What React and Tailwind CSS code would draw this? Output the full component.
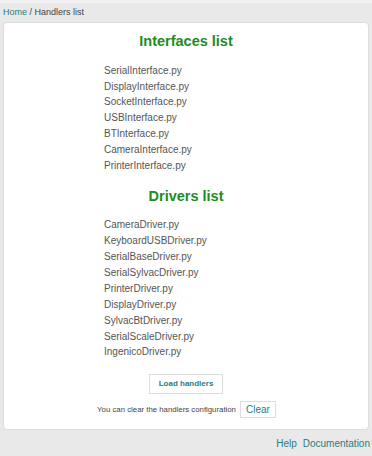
export default function App() {
  const interfaces = [
    "SerialInterface.py",
    "DisplayInterface.py",
    "SocketInterface.py",
    "USBInterface.py",
    "BTInterface.py",
    "CameraInterface.py",
    "PrinterInterface.py",
  ];
  const drivers = [
    "CameraDriver.py",
    "KeyboardUSBDriver.py",
    "SerialBaseDriver.py",
    "SerialSylvacDriver.py",
    "PrinterDriver.py",
    "DisplayDriver.py",
    "SylvacBtDriver.py",
    "SerialScaleDriver.py",
    "IngenicoDriver.py",
  ];
  return (
    <div
      className="w-[372px] h-[456px] bg-[#e9e9e9] flex flex-col overflow-hidden border-t-[3px] border-[#f2f2f2]"
      style={{ fontFamily: '"Liberation Sans", Arial, sans-serif' }}
    >
      <div className="h-[19px] flex items-center pl-[3px] text-[9px] text-[#444]">
        <span className="text-[#2a7d7d]">Home</span>
        <span>&nbsp;/ Handlers list</span>
      </div>
      <div className="mx-[3px] bg-white border border-[#dcdcdc] rounded-[4px] h-[411px] flex flex-col pt-[8px]">
        <h1 className="text-center text-[14.5px] leading-[20px] font-bold text-[#228b22]">
          Interfaces list
        </h1>
        <ul className="mt-[12px] pl-[100px] text-[10px] leading-[15.8px] text-[#555]">
          {interfaces.map((n) => (
            <li key={n}>{n}</li>
          ))}
        </ul>
        <h1 className="mt-[13px] text-center text-[14.5px] leading-[20px] font-bold text-[#228b22]">
          Drivers list
        </h1>
        <ul className="mt-[11px] pl-[100px] text-[10px] leading-[15.875px] text-[#555]">
          {drivers.map((n) => (
            <li key={n}>{n}</li>
          ))}
        </ul>
        <div className="mt-[14px] flex justify-center">
          <button className="h-[20px] px-[9px] border border-[#dedede] bg-white text-[8px] font-bold text-[#2a7d7d]">
            Load handlers
          </button>
        </div>
        <div className="mt-[7px] flex justify-center items-center gap-[4px] ml-[1px]">
          <span className="text-[7.8px] text-[#444]">You can clear the handlers configuration</span>
          <button className="h-[17px] px-[5px] border border-[#dedede] bg-white text-[10px] text-[#2a7d7d]">
            Clear
          </button>
        </div>
      </div>
      <div className="flex justify-end items-center gap-[6px] pr-[2px] h-[26px] text-[10px] text-[#2a7d7d]">
        <span>Help</span>
        <span>Documentation</span>
      </div>
    </div>
  );
}
